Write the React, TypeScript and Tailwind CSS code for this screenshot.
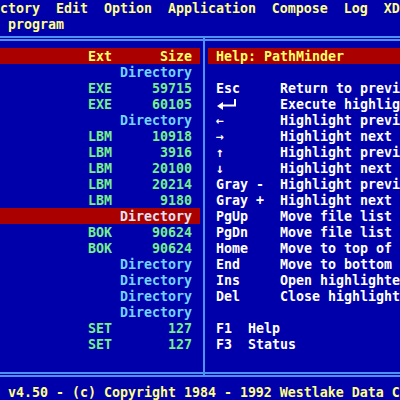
import type { ReactNode } from 'react';

type FileRow = { ext?: string; size?: string; dir?: boolean; selected?: boolean };
type HelpRow = { key?: ReactNode; text?: string; fkey?: string };

const files: FileRow[] = [
  { dir: true },
  { ext: 'EXE', size: '59715' },
  { ext: 'EXE', size: '60105' },
  { dir: true },
  { ext: 'LBM', size: '10918' },
  { ext: 'LBM', size: '3916' },
  { ext: 'LBM', size: '20100' },
  { ext: 'LBM', size: '20214' },
  { ext: 'LBM', size: '9180' },
  { dir: true, selected: true },
  { ext: 'BOK', size: '90624' },
  { ext: 'BOK', size: '90624' },
  { dir: true },
  { dir: true },
  { dir: true },
  { dir: true },
  { ext: 'SET', size: '127' },
  { ext: 'SET', size: '127' },
  {},
];

function EnterKey() {
  return (
    <svg width="24" height="16" viewBox="0 0 24 16" className="block">
      <path d="M1 10 L7 6 L7 14 Z" fill="#ffffff" />
      <path d="M6 9.5 H19 V3" stroke="#ffffff" strokeWidth="2" fill="none" />
    </svg>
  );
}

// the screen is 80 columns wide; only the first 50 are on view
const help: HelpRow[] = [
  {},
  { key: 'Esc', text: 'Return to previ' },
  { key: <EnterKey />, text: 'Execute highlig' },
  { key: '←', text: 'Highlight previ' },
  { key: '→', text: 'Highlight next' },
  { key: '↑', text: 'Highlight previ' },
  { key: '↓', text: 'Highlight next' },
  { key: 'Gray -', text: 'Highlight previ' },
  { key: 'Gray +', text: 'Highlight next' },
  { key: 'PgUp', text: 'Move file list' },
  { key: 'PgDn', text: 'Move file list' },
  { key: 'Home', text: 'Move to top of' },
  { key: 'End', text: 'Move to bottom' },
  { key: 'Ins', text: 'Open highlighte' },
  { key: 'Del', text: 'Close highlight' },
  {},
  { fkey: 'F1  Help' },
  { fkey: 'F3  Status' },
  {},
];

function DoubleRule({ stub }: { stub: 'down' | 'up' }) {
  const rule = <div className="h-[5px] border-y-2 border-[#4d92f2]" />;
  return (
    <div className="flex h-4">
      <div className="w-[203px] flex flex-col pt-1">{rule}</div>
      <div className="w-[2px] flex flex-col">
        {stub === 'up' ? <div className="h-1 bg-[#4d92f2]" /> : <div className="h-1" />}
        <div className="h-[5px] bg-[#4d92f2]" />
        {stub === 'down' ? <div className="flex-1 bg-[#4d92f2]" /> : null}
      </div>
      <div className="flex-1 flex flex-col pt-1">{rule}</div>
    </div>
  );
}

export default function App() {
  return (
    <div
      className="w-[400px] h-[400px] overflow-hidden bg-[#0000aa] flex flex-col text-[13.29px] leading-[18px] font-bold whitespace-pre"
      style={{ fontFamily: '"DejaVu Sans Mono", "Liberation Mono", monospace' }}
    >
      {/* Menu bar */}
      <div className="h-4 text-[#ffff88]">ctory  Edit  Option  Application  Compose  Log  XD</div>
      <div className="h-4 text-[#ffff88]"> program</div>

      <DoubleRule stub="down" />

      {/* File list and help panels */}
      <div className="flex">
        <div className="w-[200px] flex flex-col">
          <div className="h-4 flex justify-between bg-[#aa0000] pl-[88px] pr-2 text-[#ffff66]">
            <span>Ext</span>
            <span>Size</span>
          </div>
          {files.map((f, i) => (
            <div
              key={i}
              className={`h-4 flex justify-between pl-[88px] pr-2 ${f.selected ? 'bg-[#aa0000]' : ''}`}
            >
              <span className="text-[#74f08a]">{f.ext ?? ''}</span>
              {f.dir ? (
                <span className={f.selected ? 'text-[#e4e4f4]' : 'text-[#72d4ff]'}>Directory</span>
              ) : (
                <span className="text-[#74f08a]">{f.size ?? ''}</span>
              )}
            </div>
          ))}
        </div>

        <div className="w-2 flex">
          <div className="ml-[3px] w-[2px] bg-[#4d92f2]" />
        </div>

        <div className="flex-1 flex flex-col min-w-0">
          <div className="h-4 bg-[#aa0000] pl-2 text-[#ffff66]">Help: PathMinder</div>
          {help.map((h, i) => (
            <div key={i} className="h-4 flex pl-2 text-white">
              {h.fkey ? (
                <span>{h.fkey}</span>
              ) : (
                <>
                  <span className="w-16 shrink-0">{h.key ?? ''}</span>
                  <span>{h.text ?? ''}</span>
                </>
              )}
            </div>
          ))}
        </div>
      </div>

      <DoubleRule stub="up" />

      {/* Status line */}
      <div className="h-4 text-[#ffff88]"> v4.50 - (c) Copyright 1984 - 1992 Westlake Data C</div>
    </div>
  );
}
